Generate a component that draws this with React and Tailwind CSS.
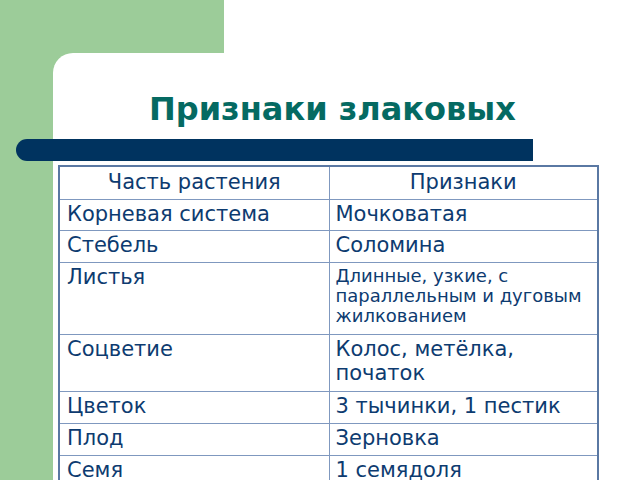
export default function App() {
  const rows = [
    { a: "Корневая система", b: "Мочковатая", h: "h-[31px]" },
    { a: "Стебель", b: "Соломина", h: "h-[32px]" },
    { a: "Листья", b: "Длинные, узкие, с параллельным и дуговым жилкованием", h: "h-[72px]", small: true },
    { a: "Соцветие", b: "Колос, метёлка, початок", h: "h-[57px]" },
    { a: "Цветок", b: "3 тычинки, 1 пестик", h: "h-[32px]" },
    { a: "Плод", b: "Зерновка", h: "h-[32px]" },
    { a: "Семя", b: "1 семядоля", h: "h-[40px]" },
  ];
  return (
    <div className="w-[640px] h-[480px] overflow-hidden bg-white flex flex-col font-['DejaVu_Sans',sans-serif] text-[#0d3b70]">
      <div className="h-[53px] flex shrink-0">
        <div className="w-[224px] bg-[#9ccc99]" />
      </div>
      <div className="flex-1 bg-[#9ccc99] pl-[53px] flex flex-col">
        <div className="flex-1 bg-white rounded-tl-[20px] flex flex-col">
          <div className="mt-[37px] pl-[96px] text-[32px] leading-[38px] font-bold text-[#056a62] whitespace-nowrap">
            Признаки злаковых
          </div>
          <div className="mt-[11px] -ml-[37px] w-[517px] h-[22px] rounded-l-full bg-[#00335f]" />
          <table className="mt-[4px] ml-[5px] w-[539px] border-collapse border-2 border-[#5a78a3] table-fixed">
            <colgroup>
              <col className="w-[270px]" />
              <col className="w-[269px]" />
            </colgroup>
            <tbody>
              <tr className="h-[33px]">
                <td className="border border-[#7f98bf] align-top text-center text-[21px] leading-[24px] pt-[3px]">Часть растения</td>
                <td className="border border-[#7f98bf] align-top text-center text-[21px] leading-[24px] pt-[3px]">Признаки</td>
              </tr>
              {rows.map((r) => (
                <tr key={r.a} className={r.h}>
                  <td className="border border-[#7f98bf] align-top pl-[7px] text-[21px] leading-[24px] pt-[2px]">{r.a}</td>
                  {r.small ? (
                    <td className="border border-[#7f98bf] align-top pl-[6px] pr-[4px] text-[18px] leading-[20px] pt-[3px]">{r.b}</td>
                  ) : (
                    <td className="border border-[#7f98bf] align-top pl-[6px] pr-[4px] text-[21px] leading-[24px] pt-[2px]">{r.b}</td>
                  )}
                </tr>
              ))}
            </tbody>
          </table>
        </div>
      </div>
    </div>
  );
}
